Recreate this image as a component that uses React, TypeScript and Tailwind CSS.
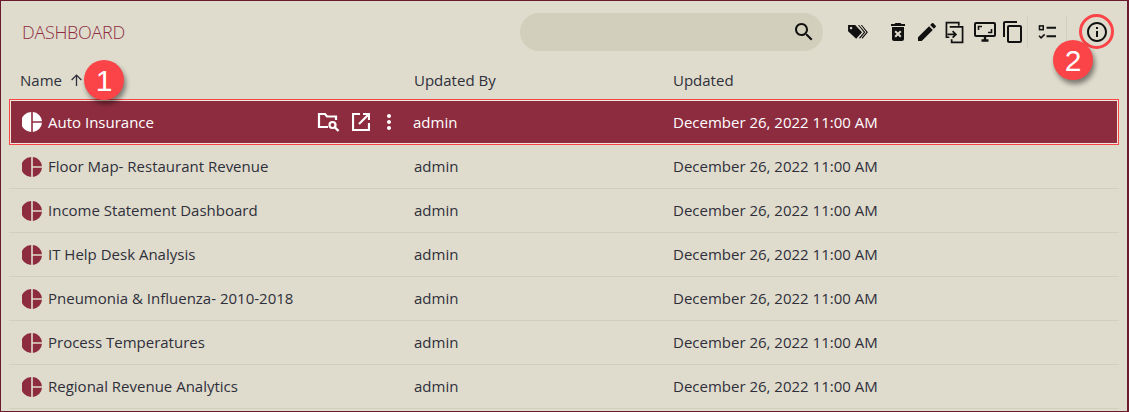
import React from 'react';

const rows = [
  'Auto Insurance',
  'Floor Map- Restaurant Revenue',
  'Income Statement Dashboard',
  'IT Help Desk Analysis',
  'Pneumonia & Influenza- 2010-2018',
  'Process Temperatures',
  'Regional Revenue Analytics',
];

const UPDATED = 'December 26, 2022 11:00 AM';

const Icon = ({ d, className }: { d: string; className: string }) => (
  <svg viewBox="0 0 24 24" fill="currentColor" className={className}>
    <path d={d} />
  </svg>
);

const PieIcon = ({ className }: { className: string }) => (
  <svg viewBox="0 0 20 20" className={className} fill="currentColor">
    <path d="M9.2 0v20A10 10 0 0 1 9.2 0z" />
    <path d="M10.8 0a10 10 0 0 1 9.2 9.2h-9.2z" />
    <path d="M10.8 10.8H20a10 10 0 0 1-9.2 9.2z" />
  </svg>
);

const TagsIcon = () => (
  <svg viewBox="0 0 22 18" className="w-[21px] h-[17px]" fill="currentColor">
    <path d="M1 1h7.5l7.3 7.8-6.2 6.7L1 7.6zM4.2 3a1.3 1.3 0 1 0 .01 0z" fillRule="evenodd" />
    <path d="M11.5 1h1.2l6.6 7.8-5.8 6.7-.8-.9 5-5.8z" />
    <path d="M14.5 1h1.2l6.3 7.8-5.8 6.7-.8-.9 5-5.8z" />
  </svg>
);

const CopySwapIcon = () => (
  <svg viewBox="0 0 20 24" className="w-[19px] h-[23px]" fill="none" stroke="currentColor" strokeWidth="1.8">
    <path d="M4.5 17H1.5V1.5h13V5" />
    <path d="M5 6h13.5v16.5H7V19" />
    <path d="M2.5 14h9m-3.5-3.5 3.5 3.5-3.5 3.5" />
  </svg>
);

const MonitorIcon = () => (
  <svg viewBox="0 0 22 20" className="w-[22px] h-[20px]" fill="none" stroke="currentColor" strokeWidth="2">
    <rect x="1" y="1" width="20" height="13" rx="1" />
    <path d="M4.5 8V4.5H8M17.5 7v3.5H14" strokeWidth="1.6" />
    <path d="M7.5 18.5h7M11 15v3" strokeWidth="2.4" />
  </svg>
);

const ChecklistIcon = () => (
  <svg viewBox="0 0 20 18" className="w-[19px] h-[17px]" fill="none" stroke="currentColor" strokeWidth="1.6">
    <rect x="1.5" y="2" width="4" height="4" />
    <path d="M9 4h10M9 13h10" strokeWidth="2" />
    <path d="m1 12.5 2.2 2.2L7 11" />
  </svg>
);

const FolderSearchIcon = () => (
  <svg viewBox="0 0 23 20" className="w-[23px] h-[20px]" fill="none" stroke="currentColor" strokeWidth="2.2">
    <path d="M11 15H2V2h6l2 2.5h9V8" />
    <circle cx="15.5" cy="13" r="3" />
    <path d="m18 15.5 3.5 3.5" strokeWidth="2.4" />
  </svg>
);

const OpenNewIcon = () => (
  <svg viewBox="0 0 18 18" className="w-[18px] h-[18px]" fill="none" stroke="currentColor" strokeWidth="2.2">
    <path d="M8 1H1v16h16v-7" />
    <path d="M11 1h6v6M17 1 7 11" />
  </svg>
);

const Badge = ({ n, className }: { n: number; className: string }) => (
  <div
    className={`absolute w-10 h-10 rounded-full bg-[#fb4447] text-white flex items-center justify-center text-[30px] shadow-[2px_4px_5px_rgba(0,0,0,0.45)] font-['Liberation_Sans',sans-serif] ${className}`}
  >
    {n}
  </div>
);

export default function App() {
  return (
    <div className="relative w-[1129px] h-[412px] overflow-hidden bg-[#dfdccd] border border-[#6a1c2c] border-r-2 text-[15px] text-[#2f2f3b] font-['Open_Sans',sans-serif]">
      <div className="flex items-center h-[62px] pl-[21px] text-[#111]">
        <h1 className="w-[102px] text-[18px] font-light text-[#8e2c3f] tracking-[-0.3px]">DASHBOARD</h1>
        <div className="ml-[396px] w-[303px] h-[38px] rounded-full bg-[#d2cfbc] flex items-center justify-end pr-[7px]">
          <Icon d="M15.5 14h-.79l-.28-.27C15.41 12.59 16 11.11 16 9.5 16 5.91 13.09 3 9.5 3S3 5.91 3 9.5 5.91 16 9.5 16c1.61 0 3.09-.59 4.23-1.57l.27.28v.79l5 4.99L20.49 19l-4.99-5zm-6 0C7.01 14 5 11.99 5 9.5S7.01 5 9.5 5 14 7.01 14 9.5 11.99 14 9.5 14z" className="w-6 h-6" />
        </div>
        <div className="flex items-center ml-[24px]">
          <TagsIcon />
          <Icon d="M6 19c0 1.1.9 2 2 2h8c1.1 0 2-.9 2-2V7H6v12zm2.46-7.12l1.41-1.41L12 12.59l2.12-2.12 1.41 1.41L13.41 14l2.12 2.12-1.41 1.41L12 15.41l-2.12 2.12-1.41-1.41L10.59 14l-2.13-2.12zM15.5 4l-1-1h-5l-1 1H5v2h14V4z" className="w-6 h-6 ml-[18px]" />
          <Icon d="M3 17.25V21h3.75L17.81 9.94l-3.75-3.75L3 17.25zM20.71 7.04c.39-.39.39-1.02 0-1.41l-2.34-2.34c-.39-.39-1.02-.39-1.41 0l-1.83 1.83 3.75 3.75 1.83-1.83z" className="w-6 h-6 ml-[5px]" />
          <div className="ml-[6px]"><CopySwapIcon /></div>
          <div className="ml-[10px]"><MonitorIcon /></div>
          <Icon d="M16 1H4c-1.1 0-2 .9-2 2v14h2V3h12V1zm3 4H8c-1.1 0-2 .9-2 2v14c0 1.1.9 2 2 2h11c1.1 0 2-.9 2-2V7c0-1.1-.9-2-2-2zm0 16H8V7h11v14z" className="w-6 h-6 ml-[5px]" />
          <div className="w-px h-[32px] bg-[#d2cfbc] ml-[2px]" />
          <div className="ml-[10px]"><ChecklistIcon /></div>
          <div className="w-px h-[32px] bg-[#d2cfbc] ml-[9px]" />
          <Icon d="M11 7h2v2h-2zm0 4h2v6h-2zm1-9C6.48 2 2 6.48 2 12s4.48 10 10 10 10-4.48 10-10S17.52 2 12 2zm0 18c-4.41 0-8-3.59-8-8s3.59-8 8-8 8 3.59 8 8-3.59 8-8 8z" className="w-6 h-6 ml-[18px]" />
        </div>
      </div>

      <div className="flex items-center h-[35px] mb-px pl-[19px]">
        <div className="w-[394px] flex items-center">
          Name
          <svg viewBox="0 0 12 12" className="w-[13px] h-[13px] ml-[8px]" fill="none" stroke="currentColor" strokeWidth="1.2">
            <path d="M6 11V1M1.5 5.5 6 1l4.5 4.5" />
          </svg>
        </div>
        <div className="w-[259px]">Updated By</div>
        <div>Updated</div>
      </div>

      <div className="ml-[8px] w-[1110px]">
        {rows.map((name, i) =>
          i === 0 ? (
            <div key={name} className="flex items-center h-[46px] bg-[#8e2c3f] text-white border border-[#fb4447] outline outline-1 -outline-offset-2 outline-[#f1e6d8]">
              <PieIcon className="w-5 h-5 ml-[12px] text-white" />
              <span className="ml-[6px] w-[269px]">{name}</span>
              <FolderSearchIcon />
              <div className="ml-[12px]"><OpenNewIcon /></div>
              <Icon d="M12 8c1.1 0 2-.9 2-2s-.9-2-2-2-2 .9-2 2 .9 2 2 2zm0 2c-1.1 0-2 .9-2 2s.9 2 2 2 2-.9 2-2-.9-2-2-2zm0 6c-1.1 0-2 .9-2 2s.9 2 2 2 2-.9 2-2-.9-2-2-2z" className="w-6 h-6 ml-[7px]" />
              <span className="ml-[12px] w-[260px]">admin</span>
              <span>{UPDATED}</span>
            </div>
          ) : (
            <div key={name} className="flex items-center h-[44px] border-b border-[#d2cfbc]">
              <PieIcon className="w-5 h-5 ml-[13px] text-[#8e2c3f]" />
              <span className="ml-[6px] w-[366px]">{name}</span>
              <span className="w-[259px]">admin</span>
              <span>{UPDATED}</span>
            </div>
          ),
        )}
      </div>

      <div className="absolute left-[1078px] top-[13px] w-[35px] h-[35px] rounded-full border-[3px] border-[#fb4447]" />
      <Badge n={1} className="left-[83px] top-[59px]" />
      <Badge n={2} className="left-[1052px] top-[39px]" />
    </div>
  );
}
